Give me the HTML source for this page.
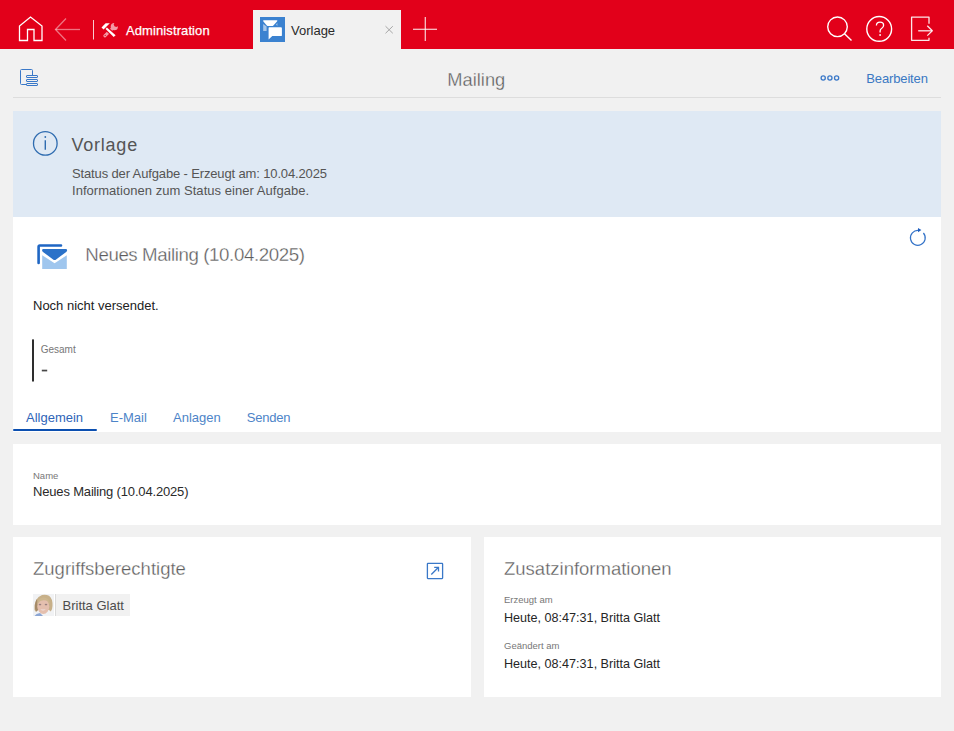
<!DOCTYPE html>
<html><head><meta charset="utf-8">
<style>
*{margin:0;padding:0;box-sizing:border-box}
html,body{width:954px;height:731px;overflow:hidden;background:#f1f1f1;font-family:"Liberation Sans",sans-serif}
.abs{position:absolute}
#hdr{position:absolute;left:0;top:0;width:954px;height:49px;background:#e2001a}
.t{position:absolute;white-space:nowrap;line-height:1}
svg{position:absolute;overflow:visible}
.panel{position:absolute;background:#fff}
</style></head><body>
<div id="hdr"></div>
<!-- home -->
<svg style="left:0;top:0" width="954" height="49">
  <path d="M19.5 40.5 V26 L30.5 17 L42 26 V40.5 H34 V29.5 H27.5 V40.5 Z" fill="none" stroke="#fff" stroke-width="1.3" stroke-linejoin="miter"/>
  <g stroke="#fff" stroke-opacity="0.45" stroke-width="1.3" fill="none">
    <path d="M55.5 29.5 H80"/><path d="M66 18.5 L55.5 29.5 L66 40.5"/>
  </g>
  <path d="M93.5 20 V39.5" stroke="#fff" stroke-opacity="0.8" stroke-width="1"/>
  <!-- tools -->
  <g fill="#f39aa5">
    <circle cx="114.3" cy="26.7" r="3.6"/>
    <path d="M112.3 28.6 L104.8 35.8" stroke="#f39aa5" stroke-width="3" stroke-linecap="round"/>
  </g>
  <circle cx="116.2" cy="24.6" r="2.4" fill="#e2001a"/>
  <circle cx="105.2" cy="35.4" r="0.6" fill="#e2001a"/>
  <path d="M106.9 27.4 L105.6 29.1 L113.7 37 L115.6 35.2 Z" stroke="#e2001a" stroke-width="2.2" fill="#e2001a"/>
  <g fill="#fff">
    <path d="M101.5 27.5 L105.6 23.2 L109.8 23.2 L103.6 29.4 Z"/>
    <path d="M106.9 27.4 L105.6 29.1 L113.7 37 L115.6 35.2 Z"/>
  </g>
  <!-- plus -->
  <g stroke="#fff" stroke-opacity="0.78" stroke-width="1.25">
    <path d="M413 29.3 H437"/><path d="M425.3 17 V41"/>
  </g>
  <!-- search -->
  <g stroke="#fff" stroke-width="1.4" fill="none">
    <circle cx="837.5" cy="26.8" r="9.8"/>
    <path d="M844.5 33.8 L851.5 40.6"/>
    <circle cx="879.2" cy="28.9" r="12.4"/>
  </g>
  <path d="M876.4 25.4 Q876.5 22.2 880 22.2 Q883.6 22.2 883.6 25.3 Q883.6 27.3 881.6 28.5 Q880.1 29.4 880.1 31 V32.6" stroke="#fff" stroke-width="1.3" fill="none"/><circle cx="880.1" cy="35" r="0.9" fill="#fff"/>
  <!-- logout -->
  <g stroke="#fff" stroke-opacity="0.9" stroke-width="1.3" fill="none" stroke-linejoin="round">
    <path d="M929 23.8 V17.1 H911.6 V40.3 H929 V37.8"/>
    <path d="M918.2 30.8 H932"/><path d="M927.3 25.8 L932.3 30.8 L927.3 35.6"/>
  </g>
</svg>
<div class="t" style="left:126px;top:24.3px;font-size:13px;color:#fff;letter-spacing:0.1px;-webkit-text-stroke:0.25px #fff">Administration</div>
<!-- tab -->
<div class="abs" style="left:253px;top:10px;width:148px;height:39px;background:#f1f1f1"></div>
<svg style="left:0;top:0" width="954" height="49">
  <rect x="260" y="17" width="25" height="25" fill="#3b82d0"/>
  <path d="M263.8 20.3 H276.8 Q277.8 20.4 277.2 21.2 L273.4 25.4 Q272.8 26.1 271.8 26.1 H268.4 Q267.4 26.1 266.8 25.4 L263.2 21.2 Q262.8 20.4 263.8 20.3 Z" fill="#fff"/>
  <path d="M263.2 24 L266.6 26.6 V31 H263.2 Z" fill="#fff" fill-opacity="0.55"/>
  <path d="M276 24.5 L277.4 23 V26 Z" fill="#fff" fill-opacity="0.55"/>
  <path d="M269.2 27.3 H281 Q281.9 27.3 281.9 28.2 V35.2 Q281.9 36.1 281 36.1 H272.3 L268.6 39.4 V28.2 Q268.6 27.3 269.2 27.3 Z" fill="#fff"/>
</svg>
<div class="t" style="left:291px;top:24.4px;font-size:13px;color:#2a2a2a">Vorlage</div>
<svg style="left:0;top:0" width="954" height="49">
  <g stroke="#a6a6a6" stroke-width="1"><path d="M385.5 26.2 L392.8 33.3"/><path d="M392.8 26.2 L385.5 33.3"/></g>
</svg>

<!-- toolbar -->
<svg style="left:0;top:49px" width="954" height="50">
  <g stroke="#3a78c8" stroke-width="1" fill="none">
    <path d="M26 35.5 H21.5 Q20.5 35.5 20.5 34.5 V21.5 Q20.5 20.5 21.5 20.5 H31.5 Q32.5 20.5 32.5 21.5 V26"/>
    <rect x="26.5" y="26.5" width="11" height="2" rx="0.5"/>
    <rect x="26.5" y="30.5" width="11" height="2" rx="0.5"/>
    <rect x="26.5" y="34.5" width="11" height="2" rx="0.5"/>
  </g>
  <g stroke="#3a78c8" stroke-width="1.3" fill="none">
    <circle cx="823.2" cy="29" r="2.1"/><circle cx="829.9" cy="29" r="2.1"/><circle cx="836.6" cy="29" r="2.1"/>
  </g>
</svg>
<div class="t" style="left:447.3px;top:71px;font-size:18.3px;color:#5c5c5c;-webkit-text-stroke:0.3px #f1f1f1">Mailing</div>
<div class="t" style="left:866.3px;top:72px;font-size:13px;color:#3a78c3;letter-spacing:-0.14px">Bearbeiten</div>
<div class="abs" style="left:13px;top:97px;width:928px;height:1px;background:#dddddd"></div>

<!-- info panel -->
<div class="panel" style="left:13px;top:111px;width:928px;height:106px;background:#dfe9f4"></div>
<svg style="left:0;top:0" width="954" height="300">
  <circle cx="45.3" cy="143.4" r="11.8" stroke="#2f6cb0" stroke-width="1.3" fill="none"/>
  <circle cx="45.3" cy="137" r="0.9" fill="#2f6cb0"/>
  <path d="M45.3 140.3 V149.8" stroke="#2f6cb0" stroke-width="1.4"/>
</svg>
<div class="t" style="left:71.6px;top:136px;font-size:18px;color:#555;letter-spacing:0.75px">Vorlage</div>
<div class="t" style="left:72px;top:166.5px;font-size:13px;color:#555;letter-spacing:-0.14px">Status der Aufgabe - Erzeugt am: 10.04.2025</div>
<div class="t" style="left:72px;top:184px;font-size:13px;color:#555;letter-spacing:0.04px">Informationen zum Status einer Aufgabe.</div>

<!-- main white panel -->
<div class="panel" style="left:13px;top:217px;width:928px;height:215px"></div>

<svg style="left:0;top:0" width="954" height="731">
  <!-- mail icon -->
  <path d="M38.6 263 V246.7 Q38.6 245.5 39.8 245.5 H61" stroke="#1f66c4" stroke-width="2.6" fill="none" stroke-linecap="round"/>
  <path d="M42.2 255.2 L54.6 263.2 L66.8 255.2 V268.9 H42.2 Z" fill="#9fc6ee"/>
  <path d="M43.3 249.1 H65.9 Q67.2 249.1 67.1 250.4 Q67 251.3 66.2 251.9 L56.1 259.5 Q54.6 260.6 53.1 259.5 L43 251.9 Q42.2 251.3 42.1 250.4 Q42 249.1 43.3 249.1 Z" fill="#2b72c9"/>
  <!-- refresh -->
  <path d="M923.4 233 A7.4 7.4 0 1 1 918.5 230.5" stroke="#3473c8" stroke-width="1.2" fill="none"/>
  <path d="M918 228 L921.4 230.1 L918 232.2 Z" fill="#1f5fc0"/>
  <!-- bar -->
  <rect x="32" y="339.4" width="2" height="42.1" fill="#2e2e2e"/>
  <rect x="41.8" y="369.7" width="5.4" height="1.7" fill="#484848"/>
  <!-- tab underline -->
  <rect x="13" y="429" width="84" height="2" rx="1" fill="#0b4fb0"/>
</svg>
<div class="t" style="left:85.3px;top:246px;font-size:18.7px;color:#5c5c5c;letter-spacing:-0.4px;-webkit-text-stroke:0.3px #fff">Neues Mailing (10.04.2025)</div>
<div class="t" style="left:33px;top:299px;font-size:13px;color:#222">Noch nicht versendet.</div>
<div class="t" style="left:40.7px;top:344.6px;font-size:10px;color:#777">Gesamt</div>
<div class="t" style="left:26px;top:411px;font-size:13px;color:#2f64b8">Allgemein</div>
<div class="t" style="left:110px;top:411px;font-size:13px;color:#4d84c8">E-Mail</div>
<div class="t" style="left:173px;top:411px;font-size:13px;color:#4d84c8">Anlagen</div>
<div class="t" style="left:246.8px;top:411px;font-size:13px;color:#4d84c8;letter-spacing:-0.25px">Senden</div>

<!-- name panel -->
<div class="panel" style="left:13px;top:444px;width:928px;height:81px"></div>
<div class="t" style="left:33px;top:470.5px;font-size:9.5px;color:#777">Name</div>
<div class="t" style="left:33px;top:485px;font-size:13px;color:#2a2a2a;letter-spacing:-0.17px">Neues Mailing (10.04.2025)</div>

<!-- bottom panels -->
<div class="panel" style="left:13px;top:537px;width:458px;height:160px"></div>
<div class="panel" style="left:484px;top:537px;width:457px;height:160px"></div>
<div class="t" style="left:33px;top:560px;font-size:18.5px;color:#5c5c5c;-webkit-text-stroke:0.3px #fff">Zugriffsberechtigte</div>
<svg style="left:0;top:0" width="954" height="731">
  <rect x="427.4" y="563.4" width="15.2" height="15.2" stroke="#3a78c8" stroke-width="1.3" fill="none" rx="0.5"/>
  <path d="M431.3 574.5 L438.3 567.5" stroke="#3a78c8" stroke-width="1.3"/>
  <path d="M434.2 567.3 H438.5 V571.4" stroke="#3a78c8" stroke-width="1.3" fill="none"/>
</svg>
<div class="abs" style="left:33px;top:594px;width:97px;height:22px;background:#f1f1f1"></div>
<div class="abs" style="left:54px;top:594px;width:2px;height:22px;background:#fff"></div>
<div class="abs" style="left:55px;top:594px;width:1px;height:22px;background:#dadada"></div>
<svg style="left:33px;top:594px" width="21" height="22">
  <rect x="0" y="0" width="21" height="22" fill="#f1f2f4"/>
  <path d="M1.5 16 Q0.8 4 9 1 Q13 0.2 16 1.8 Q19.8 4.5 19.5 12 Q19.3 16 17.8 17.5 L16 16 L5 16 L3 18 Z" fill="#c7b089"/>
  <path d="M2 15 Q1.5 8 4 5 L5 16 L3.3 17.5 Z" fill="#a58a68"/>
  <ellipse cx="10.3" cy="12.4" rx="6" ry="7.6" fill="#e4bfae"/>
  <path d="M4.3 11 Q4.5 4.2 10 3.6 Q16.5 3.5 17.2 11 Q15.5 6 10.5 6.2 Q6 6.5 4.3 11 Z" fill="#cdb68e"/>
  <ellipse cx="7" cy="10.6" rx="1.3" ry="0.8" fill="#9a8080"/>
  <ellipse cx="13" cy="10.6" rx="1.3" ry="0.8" fill="#9a8080"/>
  <path d="M7.3 15.2 Q10 17.8 12.8 15.2 Q10 16 7.3 15.2 Z" fill="#f2e4e2"/>
  <path d="M1.5 22 Q3 19.5 7 19 L10 22 Z" fill="#8ca6d4"/>
</svg>
<div class="t" style="left:62.5px;top:599px;font-size:13px;color:#4c4c4c">Britta Glatt</div>

<div class="t" style="left:504px;top:560px;font-size:18.5px;color:#5c5c5c;-webkit-text-stroke:0.3px #fff">Zusatzinformationen</div>
<div class="t" style="left:504px;top:594.7px;font-size:9.5px;color:#777">Erzeugt am</div>
<div class="t" style="left:504px;top:611.9px;font-size:12.6px;color:#262626">Heute, 08:47:31, Britta Glatt</div>
<div class="t" style="left:504px;top:640.7px;font-size:9.5px;color:#777">Geändert am</div>
<div class="t" style="left:504px;top:658px;font-size:12.6px;color:#262626">Heute, 08:47:31, Britta Glatt</div>
</body></html>
